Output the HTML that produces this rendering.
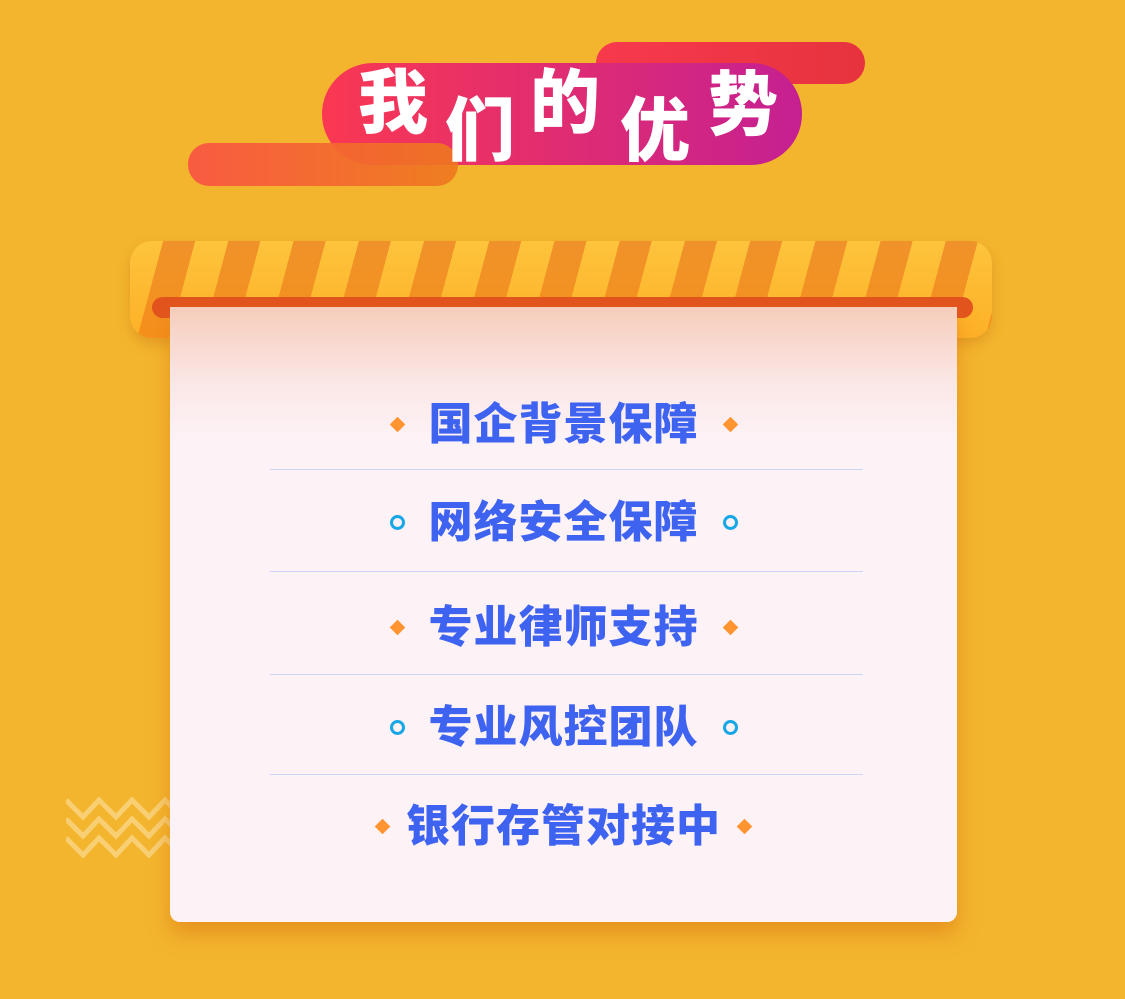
<!DOCTYPE html>
<html><head><meta charset="utf-8"><style>
body{margin:0;width:1125px;height:999px;background:#F3B52E;position:relative;overflow:hidden;font-family:"Liberation Sans","Noto Sans CJK SC",sans-serif}
.a{position:absolute}
.bar1{left:596px;top:42px;width:269px;height:42px;border-radius:21px;background:linear-gradient(90deg,#F8394D,#E6333E)}
.pill{left:322px;top:63px;width:480px;height:102px;border-radius:51px;background:linear-gradient(90deg,#FA3852,#C52092)}
.bar2{left:188px;top:143px;width:270px;height:43px;border-radius:21px;background:linear-gradient(90deg,rgba(249,86,66,.95),rgba(238,120,30,.9))}
.t{color:#fff;font-weight:900;font-size:70px;line-height:70px}
.awn{left:130px;top:241px;width:862px;height:97px;border-radius:22px;overflow:hidden;box-shadow:0 6px 12px rgba(200,110,20,.35);
background:linear-gradient(180deg,rgba(255,210,70,.0),rgba(255,140,0,.35)),repeating-linear-gradient(105deg,#FDC43C 0 32px,#F0922A 32px 63px)}
.red{left:152px;top:297px;width:821px;height:21px;border-radius:11px;background:#E3541E}
.card{left:170px;top:307px;width:787px;height:615px;border-radius:0 0 10px 10px;background:linear-gradient(180deg,#F6CDBB 0,#FBE8E8 80px,#FDF2F5 130px);box-shadow:0 12px 20px rgba(220,120,20,.55)}
.it{left:170px;width:787px;text-align:center;color:#3D63F0;font-weight:900;font-size:44px;line-height:50px;letter-spacing:1px;white-space:nowrap}
.ln{left:270px;width:593px;height:1px;background:#CDD5F6}
.dm{display:inline-block;width:11px;height:11px;background:#FF9431;transform:rotate(45deg);vertical-align:middle;margin:0 26px 6px}
.ci{display:inline-block;width:9px;height:9px;border:3px solid #17A7E6;border-radius:50%;vertical-align:middle;margin:0 24px 6px}
</style></head><body>
<div class="a bar1"></div>
<div class="a pill"></div>
<div class="a bar2"></div>
<div class="a t" style="left:358px;top:68px">我</div>
<div class="a t" style="left:445px;top:96px">们</div>
<div class="a t" style="left:530px;top:68px">的</div>
<div class="a t" style="left:620px;top:96px">优</div>
<div class="a t" style="left:708px;top:70px">势</div>
<svg class="a" style="left:66px;top:797px" width="110" height="65"><g fill="none" stroke="rgba(255,240,200,.45)" stroke-width="5"><path d="M0 3l17 17 16-17 17 17 16-17 17 17 16-17 17 17"/><path d="M0 22l17 17 16-17 17 17 16-17 17 17 16-17 17 17"/><path d="M0 41l17 17 16-17 17 17 16-17 17 17 16-17 17 17"/></g></svg>
<div class="a awn"></div>
<div class="a red"></div>
<div class="a card"></div>
<div class="a it" style="top:400px"><span class="dm"></span>国企背景保障<span class="dm"></span></div>
<div class="a ln" style="top:469px"></div>
<div class="a it" style="top:498px"><span class="ci"></span>网络安全保障<span class="ci"></span></div>
<div class="a ln" style="top:571px"></div>
<div class="a it" style="top:603px"><span class="dm"></span>专业律师支持<span class="dm"></span></div>
<div class="a ln" style="top:674px"></div>
<div class="a it" style="top:703px"><span class="ci"></span>专业风控团队<span class="ci"></span></div>
<div class="a ln" style="top:774px"></div>
<div class="a it" style="top:802px"><span class="dm" style="margin:0 18px 6px"></span>银行存管对接中<span class="dm" style="margin:0 18px 6px"></span></div>
</body></html>
